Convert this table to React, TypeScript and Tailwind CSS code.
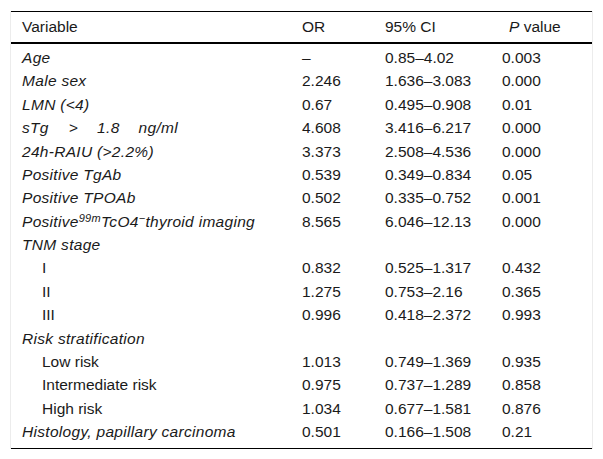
const rows: { v: React.ReactNode; or: string; ci: string; p: string; sub?: boolean; italic?: boolean }[] = [
  { v: "Age", or: "–", ci: "0.85–4.02", p: "0.003", italic: true },
  { v: "Male sex", or: "2.246", ci: "1.636–3.083", p: "0.000", italic: true },
  { v: "LMN (<4)", or: "0.67", ci: "0.495–0.908", p: "0.01", italic: true },
  {
    v: (
      <>
        sTg<span className="ml-[20px]">&gt;</span>
        <span className="ml-[19px]">1.8</span>
        <span className="ml-[19px]">ng/ml</span>
      </>
    ),
    or: "4.608",
    ci: "3.416–6.217",
    p: "0.000",
    italic: true,
  },
  { v: "24h-RAIU (>2.2%)", or: "3.373", ci: "2.508–4.536", p: "0.000", italic: true },
  { v: "Positive TgAb", or: "0.539", ci: "0.349–0.834", p: "0.05", italic: true },
  { v: "Positive TPOAb", or: "0.502", ci: "0.335–0.752", p: "0.001", italic: true },
  {
    v: (
      <>
        Positive<sup className="text-[11px] top-[-0.45em]">99m</sup>TcO4<sup className="text-[11px] top-[-0.45em]">−</sup>thyroid imaging
      </>
    ),
    or: "8.565",
    ci: "6.046–12.13",
    p: "0.000",
    italic: true,
  },
  { v: "TNM stage", or: "", ci: "", p: "", italic: true },
  { v: "I", or: "0.832", ci: "0.525–1.317", p: "0.432", sub: true },
  { v: "II", or: "1.275", ci: "0.753–2.16", p: "0.365", sub: true },
  { v: "III", or: "0.996", ci: "0.418–2.372", p: "0.993", sub: true },
  { v: "Risk stratification", or: "", ci: "", p: "", italic: true },
  { v: "Low risk", or: "1.013", ci: "0.749–1.369", p: "0.935", sub: true },
  { v: "Intermediate risk", or: "0.975", ci: "0.737–1.289", p: "0.858", sub: true },
  { v: "High risk", or: "1.034", ci: "0.677–1.581", p: "0.876", sub: true },
  { v: "Histology, papillary carcinoma", or: "0.501", ci: "0.166–1.508", p: "0.21", italic: true },
];

export default function App() {
  return (
    <div className="w-[603px] h-[459px] bg-white pt-[11px] pl-[10px] font-['Liberation_Sans',Arial,sans-serif] text-[15.5px] text-[#1a1a1a]">
      <div className="w-[583px] border-x border-[#ececec]">
        <div className="border-t border-b-2 border-black flex items-center h-[33px] leading-none">
          <span className="pl-[11px] w-[291px]">Variable</span>
          <span className="w-[83px]">OR</span>
          <span className="w-[117px]">95% CI</span>
          <span className="pl-[7px]">
            <i>P</i> value
          </span>
        </div>
        <div className="border-b border-black pt-[2px] pb-[4px]">
          {rows.map((r, i) => (
            <div key={i} className="flex items-center h-[23.4px] leading-none whitespace-nowrap">
              <span className={`w-[291px] ${r.sub ? "pl-[31px]" : "pl-[11px]"} ${r.italic ? "italic tracking-[0.3px]" : ""}`}>{r.v}</span>
              <span className="w-[83px]">{r.or}</span>
              <span className="w-[117px]">{r.ci}</span>
              <span>{r.p}</span>
            </div>
          ))}
        </div>
      </div>
    </div>
  );
}
